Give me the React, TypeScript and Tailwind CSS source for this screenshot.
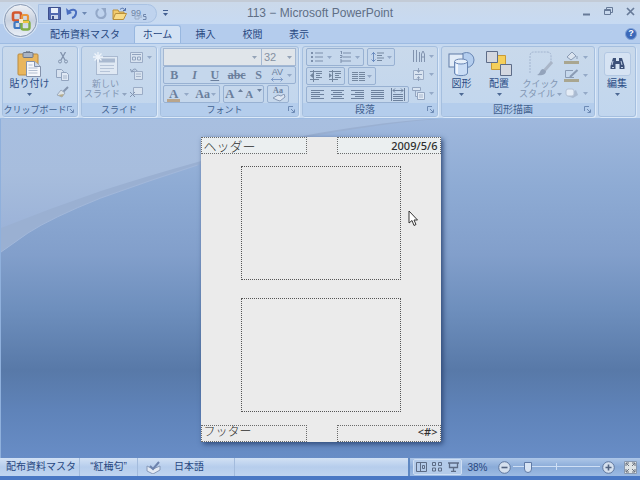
import React, { useState } from 'react';

type IconProps = { className?: string };

// ─── Small helpers ──────────────────────────────────────────────────────────
function Icon({ w, h, className = '', children }: { w: number; h: number; className?: string; children: React.ReactNode }) {
  return (
    <svg width={w} height={h} viewBox={`0 0 ${w} ${h}`} fill="none" className={`shrink-0 ${className}`} aria-hidden="true">
      {children}
    </svg>
  );
}

function Caret({ className = 'text-[#5b76a3]' }: IconProps) {
  return (
    <Icon w={5} h={3} className={className}>
      <path d="M0 0h5L2.500 3z" fill="currentColor" />
    </Icon>
  );
}

function Group({ label, launcher, small, className, children }: { label: string; launcher?: boolean; small?: boolean; className: string; children: React.ReactNode }) {
  return (
    <section
      aria-label={label || undefined}
      className={`flex h-[71px] shrink-0 flex-col overflow-hidden rounded-[3px] border border-[#a5bfdf] bg-gradient-to-b from-[#c9d9eb] to-[#c1d6ee] shadow-[1px_1px_0_#dce9f8] ${className}`}
    >
      <div className="flex min-h-0 flex-1">{children}</div>
      {label && (
        <div className={`flex h-[13px] items-center bg-[#b4cdec] leading-3 text-[#42618f] ${small ? 'text-[9px]' : 'text-[10px]'}`}>
          <span className="flex-1 whitespace-nowrap text-center">{label}</span>
          {launcher && (
            <button type="button" aria-label={`${label}の詳細`} className="mr-[3px]">
              <Icon w={7} h={7} className="text-[#6d8ab5]">
                <path d="M.5 5V.5H5M3 3l3 3M6.500 3.500v3h-3" stroke="currentColor" />
              </Icon>
            </button>
          )}
        </div>
      )}
    </section>
  );
}

function Box({ className = '', children }: { className?: string; children: React.ReactNode }) {
  return <div className={`flex h-[18px] items-center justify-around rounded-[2px] border border-[#98b1d2] bg-[#c5d7ec] ${className}`}>{children}</div>;
}

function Tool({ label, className = '', children }: { label: string; className?: string; children: React.ReactNode }) {
  return (
    <button type="button" aria-label={label} className={`flex items-center justify-center gap-1 ${className}`}>
      {children}
    </button>
  );
}

function BigButton({ lines, off, split, className, icon }: { lines: string[]; off?: boolean; split?: boolean; className: string; icon: React.ReactNode }) {
  return (
    <button
      type="button"
      className={`flex shrink-0 flex-col items-center pt-[3px] leading-[10px] ${split ? 'text-[9px]' : 'text-[10px]'} ${off ? 'text-[#8195b2]' : 'text-[#2b4c85]'} ${className}`}
    >
      <span className="flex h-[27px] items-center">{icon}</span>
      <span className="mt-[2px] whitespace-nowrap">{lines[0]}</span>
      <span className="flex h-[10px] items-center gap-[2px] whitespace-nowrap">
        {lines[1]}
        <Caret className={split ? 'text-[#90a4c0]' : 'text-[#4d6994]'} />
      </span>
    </button>
  );
}

// ─── Icons ──────────────────────────────────────────────────────────────────
function OfficeLogo() {
  return (
    <Icon w={22} h={22}>
      <rect x="3" y="2.500" width="8" height="8" rx="2" stroke="#d3582f" strokeWidth="2.600" />
      <rect x="12" y="5" width="6" height="6" rx="1.500" stroke="#e9953b" strokeWidth="2.200" />
      <rect x="4.500" y="12" width="6" height="6" rx="1.500" stroke="#3f78c2" strokeWidth="2.200" />
      <rect x="11.500" y="11.500" width="8" height="8" rx="2" stroke="#7fae46" strokeWidth="2.400" />
      <path d="M9 9h4v4H9z" fill="#fbe9c4" />
      <path d="M13 12h6" stroke="#f0c53f" strokeWidth="2" />
    </Icon>
  );
}

function PasteIcon() {
  return (
    <Icon w={25} h={26}>
      <rect x="1" y="3" width="20" height="21" rx="1" fill="#e9b65d" stroke="#b98b43" />
      <rect x="6" y="1.500" width="10" height="5" rx="1" fill="#aab4c3" stroke="#6c7789" />
      <path d="M9 1.500a2 1.500 0 0 1 4 0" stroke="#6c7789" />
      <path d="M9.500 10.500h8l6 5v10h-14z" fill="#f5f7fb" stroke="#8492ab" />
      <path d="M17.500 10.500v5h6" fill="#ccd7e8" stroke="#8492ab" />
      <path d="M11.500 14h4M11.500 17h9M11.500 19.500h9M11.500 22h9" stroke="#b3bfd2" />
    </Icon>
  );
}

function NewSlideIcon() {
  return (
    <Icon w={26} h={24}>
      <rect x="3.500" y="4.500" width="21" height="18" fill="#dfe8f3" stroke="#a9b9d0" />
      <path d="M6 8.500h16" stroke="#a9b9d0" strokeWidth="4" />
      <path d="M7 13.500h14M7 16.500h14M7 19.500h10" stroke="#b6c4d8" />
      <path d="M5 0v10M0 5h10M1.500 1.500l7 7M8.500 1.500l-7 7" stroke="#eef4fb" strokeWidth="1.300" />
    </Icon>
  );
}

function ShapesIcon() {
  return (
    <Icon w={27} h={26}>
      <circle cx="18.500" cy="9" r="7.500" fill="#b3cdee" stroke="#6785b3" />
      <rect x="1" y="3" width="14" height="13" fill="#e2ecf8" stroke="#5f7ba6" />
      <path d="M6.500 11v11c0 3.500 13 3.500 13 0V11z" fill="#c9dcf5" stroke="#6885b3" />
      <path d="M9 12v11" stroke="#eff5fc" strokeWidth="2" />
      <ellipse cx="13" cy="10.500" rx="6.500" ry="2.500" fill="#e6effa" stroke="#6885b3" />
    </Icon>
  );
}

function ArrangeIcon() {
  return (
    <Icon w={28} h={27}>
      <path d="M6.500 5.500h14v14h-14z" fill="#f5cf5b" stroke="#c99a35" />
      <path d="M1.500 1.500h11v11h-11z" fill="#d3d7e0" stroke="#5d6c88" />
      <path d="M15.500 14.500h11v11h-11z" fill="#d3d7e0" stroke="#5d6c88" />
    </Icon>
  );
}

function QuickStyleIcon() {
  return (
    <Icon w={27} h={26}>
      <path d="M3 22V5q0-4 4-4h13q4 0 4 4v6" stroke="#a2b4cf" strokeDasharray="2 1" />
      <path d="M25 11l-8 9" stroke="#a9b5c7" strokeWidth="3" />
      <path d="M10 24c4 1 9 0 9-4l-3-2c-3 0-2 4-6 6z" fill="#93a3bb" />
    </Icon>
  );
}

function BinocularsIcon() {
  return (
    <Icon w={15} h={13}>
      <path d="M3 1h3v3h3V1h3l2.500 8v3h-5V7h-4v5h-5V9z" fill="#3c5078" />
      <path d="M2 8l1-4M12 8l-1-4M2 10.500h2M11 10.500h2" stroke="#c3d1e6" />
    </Icon>
  );
}

function CutIcon() {
  return (
    <Icon w={12} h={12}>
      <path d="M3.500 0L8 8M8.500 0L4 8" stroke="#8192ac" strokeWidth="1.300" />
      <circle cx="3" cy="9.500" r="1.500" stroke="#8192ac" />
      <circle cx="9" cy="9.500" r="1.500" stroke="#8192ac" />
    </Icon>
  );
}

function CopyIcon() {
  return (
    <Icon w={13} h={12}>
      <path d="M.5.5h5l2 2v6h-7z" fill="#d6e1ef" stroke="#92a4bf" />
      <path d="M5.500 3.500h5l2 2v6h-7z" fill="#dfe8f4" stroke="#92a4bf" />
      <path d="M7 7h4M7 9h4" stroke="#a8b7cc" />
    </Icon>
  );
}

function BrushIcon() {
  return (
    <Icon w={13} h={12}>
      <path d="M12 1L7 6" stroke="#8495ae" strokeWidth="2" />
      <path d="M5 4l4 3-3 4-5-2z" fill="#dde3e8" stroke="#9aa9bd" />
      <path d="M2 9l4 2 2-3z" fill="#b4ab8b" />
    </Icon>
  );
}

function LayoutIcon() {
  return (
    <Icon w={13} h={11}>
      <path d="M.5.5h12v10H.5z" fill="#d7e2ef" stroke="#9bacc6" />
      <path d="M2 2.500h9M2.500 5h3v3h-3zM7.500 5h3v3h-3z" stroke="#92a4bf" />
    </Icon>
  );
}

function ResetIcon() {
  return (
    <Icon w={13} h={12}>
      <path d="M4.500 3.500h8v8h-8z" fill="#d7e2ef" stroke="#9bacc6" />
      <path d="M6 6h5M6 8.500h5" stroke="#a5b4ca" />
      <path d="M7 3C6 0 3 1 2 3M.5 1l1 3 3-1" stroke="#8294b0" />
    </Icon>
  );
}

function DeleteSlideIcon() {
  return (
    <Icon w={13} h={12}>
      <path d="M3.500 1.500h9v7h-9z" fill="#d7e2ef" stroke="#9bacc6" />
      <path d="M0 6l5 5M5 6l-5 5" stroke="#8294b0" />
    </Icon>
  );
}

function ListIcon({ numbered }: { numbered?: boolean }) {
  return (
    <Icon w={12} h={12} className="text-[#7c8fab]">
      {numbered ? (
        <path d="M1 0h1.500v3M1 4.500h2v2H1M1 9h2v2H1" stroke="currentColor" />
      ) : (
        <path d="M0 1h2v2H0zM0 5h2v2H0zM0 9h2v2H0z" fill="currentColor" />
      )}
      <path d="M4 2h8M4 6h8M4 10h8" stroke="currentColor" />
    </Icon>
  );
}

function LineSpacingIcon() {
  return (
    <Icon w={14} h={12}>
      <path d="M2.500 1v10M.5 3.500l2-2 2 2M.5 8.500l2 2 2-2" stroke="#6c8dc0" />
      <path d="M6 2h7M6 4.500h5M6 7h7M6 9.500h5" stroke="#74879f" />
    </Icon>
  );
}

function IndentIcon({ out }: { out?: boolean }) {
  return (
    <Icon w={14} h={12} className="text-[#73869f]">
      <path d="M1 1.500h12M7 3.500h6M7 5.500h4M7 7.500h6M1 9.500h9M4.500 0v12" stroke="currentColor" />
      <path d={out ? 'M4 3L1 5.500 4 8z' : 'M1 3l3 2.500L1 8z'} fill="currentColor" />
    </Icon>
  );
}

function AlignIcon({ rows }: { rows: [number, number][] }) {
  return (
    <Icon w={13} h={11} className="text-[#6d819d]">
      {rows.map(([x, w], i) => (
        <path key={i} d={`M${x} ${i * 2 + 1.5}h${w}`} stroke="currentColor" />
      ))}
    </Icon>
  );
}

const ALIGN: { label: string; rows: [number, number][] }[] = [
  { label: '左揃え', rows: [[0, 13], [0, 9], [0, 13], [0, 9], [0, 13]] },
  { label: '中央揃え', rows: [[0, 13], [2, 9], [0, 13], [2, 9], [0, 13]] },
  { label: '右揃え', rows: [[0, 13], [4, 9], [0, 13], [4, 9], [0, 13]] },
  { label: '両端揃え', rows: [[0, 13], [0, 13], [0, 13], [0, 13], [0, 13]] },
];

// Blue master background with the lighter wave in the top left corner
function Backdrop() {
  return (
    <svg className="absolute inset-0 h-full w-full" viewBox="0 0 640 339" preserveAspectRatio="none" aria-hidden="true">
      <defs>
        <linearGradient id="base" x1="0" y1="0" x2="0" y2="1">
          <stop offset="0" stopColor="#9fb8dd" />
          <stop offset=".2" stopColor="#8eabd4" />
          <stop offset=".4" stopColor="#829fcb" />
          <stop offset=".56" stopColor="#6e8fbd" />
          <stop offset=".74" stopColor="#5879a8" />
          <stop offset=".86" stopColor="#5f83b9" />
          <stop offset="1" stopColor="#688dc6" />
        </linearGradient>
        <linearGradient id="wave" x1="0" y1="0" x2="0" y2="1">
          <stop offset="0" stopColor="#a8bfe0" />
          <stop offset=".5" stopColor="#a7bddd" />
          <stop offset="1" stopColor="#9cb3d8" />
        </linearGradient>
      </defs>
      <path d="M0 0h640v339H0z" fill="url(#base)" />
      <path d="M0 0h440Q400 2 318 16 250 29 197 46 150 61 100 79 50 99 27 114L0 133z" fill="#9ab0d2" />
      <path d="M0 133L27 114Q50 99 100 79 150 61 197 46" stroke="#a3b8da" fill="none" />
      <path d="M0 0h430Q390 2 318 14 250 27 197 43 150 56 100 72 50 89 0 109z" fill="url(#wave)" />
    </svg>
  );
}

const TABS = [
  { label: '配布資料マスタ', width: 'w-[98px]' },
  { label: 'ホーム', width: 'w-[47px]' },
  { label: '挿入', width: 'w-[49px]' },
  { label: '校閲', width: 'w-[45px]' },
  { label: '表示', width: 'w-[48px]' },
];

export default function App() {
  const [tab, setTab] = useState('ホーム');
  const [zoom, setZoom] = useState(14);

  return (
    <div className="flex min-h-screen flex-col bg-[#b5cdee] font-['Liberation_Sans','Noto_Sans_CJK_JP',sans-serif] text-[10px] text-[#27477f]">
      {/* Title bar */}
      <header className="relative flex h-6 items-center border-t-2 border-[#c3cbd6] bg-gradient-to-b from-[#cbd9ea] to-[#c7daf2]">
        <button
          type="button"
          aria-label="Office ボタン"
          className="absolute left-[4px] top-[2px] z-10 flex size-[33px] items-center justify-center rounded-full border border-[#8d9db5] bg-gradient-to-b from-[#eef1f6] via-[#c8d1df] to-[#e9eff7] shadow-[0_0_0_1px_#dbe6f4]"
        >
          <OfficeLogo />
        </button>
        <div className="ml-[38px] flex h-[19px] w-[119px] items-center rounded-r-full border border-[#a9c2e3] bg-[#bfd3ee] pl-2">
          <Tool label="上書き保存" className="w-[14px]">
            <Icon w={13} h={13}>
              <path d="M.5.5h12v12H.5z" fill="#5269b0" stroke="#3d4f8c" />
              <path d="M3 1h7v5H3z" fill="#e8effa" />
              <path d="M3 8h7v4H3z" fill="#ccd6ea" />
              <path d="M4 9h2v3H4z" fill="#3d4f8c" />
            </Icon>
          </Tool>
          <Tool label="元に戻す" className="ml-[5px]">
            <Icon w={12} h={12}>
              <path d="M2.500 5.500C5 1.500 11 2 10 6.500 9.500 9 8 10.500 6 11" stroke="#4b6fc0" strokeWidth="2" />
              <path d="M0 1l1 7 5-2z" fill="#4b6fc0" />
            </Icon>
            <Caret className="text-[#6d88b3]" />
          </Tool>
          <Tool label="やり直し" className="ml-[8px]">
            <Icon w={12} h={12}>
              <path d="M3.500 2C0 5 1 11 6 11s5.500-5 3-8" stroke="#93a8c8" strokeWidth="2" />
              <path d="M6 1h5v5z" fill="#93a8c8" />
            </Icon>
          </Tool>
          <Tool label="開く" className="ml-[5px]">
            <Icon w={15} h={13}>
              <path d="M1 12V3h5l1 2h5v2" fill="#f1ca6d" stroke="#b98f3c" />
              <path d="M1 12.500l2.500-6h11l-3 6z" fill="#f8db89" stroke="#b98f3c" />
              <path d="M8 2.500c2-2 4-1.500 4.500.5M13.500 1v2.500H11" stroke="#4d6ca8" />
            </Icon>
          </Tool>
          <button type="button" className="relative ml-[4px] h-[15px] w-[15px] text-left text-[9px] leading-[9px] text-[#6d82a3]">
            99
            <Icon w={13} h={7} className="absolute bottom-0 left-[3px]">
              <path d="M1 2h4v3H1zM7 1v3" stroke="#9aacc6" />
              <path d="M12 .5H9.500v2H12v3H9" stroke="#7087ad" />
            </Icon>
          </button>
        </div>
        <Tool label="クイック アクセスのカスタマイズ" className="ml-[6px] flex-col gap-[1px]">
          <Icon w={5} h={6} className="text-[#425f91]">
            <path d="M0 .5h5" stroke="currentColor" />
            <path d="M0 3h5L2.500 6z" fill="currentColor" />
          </Icon>
        </Tool>
        <h1 className="flex-1 pr-[168px] text-center text-[12px] text-[#5f6f86]">113 − Microsoft PowerPoint</h1>
        <div className="absolute right-[5px] top-[4px] flex items-center gap-[13px] text-[#677a98]">
          <Tool label="最小化">
            <Icon w={9} h={10}><path d="M1 8.500h7" stroke="currentColor" strokeWidth="2" /></Icon>
          </Tool>
          <Tool label="元に戻す (縮小)">
            <Icon w={9} h={10}>
              <path d="M2.500 3V1.500h6v5H7M.5 3.500h6v5h-6zM.5 4.500h6" stroke="currentColor" />
            </Icon>
          </Tool>
          <Tool label="閉じる">
            <Icon w={9} h={10}><path d="M1 2l7 7M8 2L1 9" stroke="currentColor" strokeWidth="1.700" /></Icon>
          </Tool>
        </div>
      </header>

      {/* Ribbon tabs */}
      <nav className="flex h-[19px] items-end bg-[#b4cced] pl-[36px]" role="tablist">
        {TABS.map((t) => (
          <button
            key={t.label}
            type="button"
            role="tab"
            aria-selected={tab === t.label}
            onClick={() => setTab(t.label)}
            className={`h-[18px] shrink-0 whitespace-nowrap text-[10px] leading-[17px] ${t.width} ${
              tab === t.label ? 'rounded-t-[3px] border border-b-0 border-[#98b7df] bg-[#d3e2f4]' : ''
            }`}
          >
            {t.label}
          </button>
        ))}
        <button
          type="button"
          aria-label="ヘルプ"
          className="ml-auto mr-[3px] flex size-[12px] items-center justify-center self-center rounded-full border border-[#7d9fd6] bg-[#3b68b8] text-[9px] font-bold leading-none text-white"
        >
          ?
        </button>
      </nav>

      {/* Ribbon */}
      <div className="flex h-[76px] gap-[3px] overflow-hidden border-y border-[#9dbbe2] bg-[#c6d9f0] px-[2px] pt-[2px]">
        <Group label="クリップボード" launcher small className="w-[76px]">
          <BigButton lines={['貼り付け']} className="w-[53px]" icon={<PasteIcon />} />
          <div className="flex flex-col justify-around py-[2px]">
            <Tool label="切り取り"><CutIcon /></Tool>
            <Tool label="コピー"><CopyIcon /></Tool>
            <Tool label="書式のコピー"><BrushIcon /></Tool>
          </div>
        </Group>

        <Group label="スライド" small className="w-[76px]">
          <BigButton lines={['新しい', 'スライド']} off split className="w-[47px]" icon={<NewSlideIcon />} />
          <div className="flex flex-col items-start justify-around py-[2px] pl-[1px]">
            <Tool label="レイアウト"><LayoutIcon /><Caret className="text-[#94a9c7]" /></Tool>
            <Tool label="リセット"><ResetIcon /></Tool>
            <Tool label="削除"><DeleteSlideIcon /></Tool>
          </div>
        </Group>

        <Group label="フォント" launcher small className="w-[139px]">
          <div className="flex flex-col pl-[2px] pt-[1px] font-['Liberation_Serif',serif] text-[12px] leading-4 text-[#6b7f9c]">
            <div className="flex h-[18px] border border-[#a4b8d3] bg-[#e0e5ea] font-['Liberation_Sans',sans-serif]">
              <label className="relative flex w-[98px] items-center border-r border-[#a4b8d3]">
                <select aria-label="フォント名" className="h-full w-full appearance-none bg-transparent pl-1 text-[11px]">
                  <option></option>
                </select>
                <Caret className="pointer-events-none absolute right-[4px] text-[#94a3b7]" />
              </label>
              <label className="relative flex w-[33px] items-center">
                <select aria-label="フォント サイズ" className="h-full w-full appearance-none bg-transparent pl-[2px] text-[11px] text-[#8591a2]">
                  <option>32</option>
                </select>
                <Caret className="pointer-events-none absolute right-[3px] text-[#94a3b7]" />
              </label>
            </div>
            <Box className="w-[133px]">
              <Tool label="太字" className="w-[20px]"><b>B</b></Tool>
              <Tool label="斜体" className="w-[20px]"><i className="font-bold">I</i></Tool>
              <Tool label="下線" className="w-[20px]"><span className="font-bold underline">U</span></Tool>
              <Tool label="取り消し線" className="w-[23px]"><span className="font-bold line-through">abc</span></Tool>
              <Tool label="影" className="w-[20px]"><b>S</b></Tool>
              <Tool label="文字の間隔" className="w-[26px]">
                <span className="flex flex-col items-center font-['Liberation_Sans',sans-serif] text-[9px] leading-[9px]">
                  AV
                  <Icon w={12} h={5}><path d="M0 2.500h12M2.500.5l-2 2 2 2M9.500.5l2 2-2 2" stroke="#7f9cc9" /></Icon>
                </span>
                <Caret className="text-[#94a9c7]" />
              </Tool>
            </Box>
            <div className="mt-[1px] flex gap-[3px]">
              <Box className="w-[57px]">
                <Tool label="フォントの色">
                  <span className="h-[15px] border-b-[3px] border-[#b9a58c] px-[2px] text-[13px] font-bold leading-[13px]">A</span>
                  <Caret className="text-[#94a9c7]" />
                </Tool>
                <Tool label="文字種の変換" className="gap-[1px] font-bold">Aa<Caret className="text-[#94a9c7]" /></Tool>
              </Box>
              <Box className="w-[41px]">
                <Tool label="拡大" className="gap-0 text-[13px] font-bold">A<Caret className="mb-2 rotate-180" /></Tool>
                <Tool label="縮小" className="gap-0 text-[11px] font-bold">A<Caret className="mb-2" /></Tool>
              </Box>
              <Box className="w-[22px]">
                <Tool label="書式のクリア">
                  <span className="flex flex-col items-center text-[8px] font-bold leading-[7px]">
                    Aa
                    <Icon w={15} h={8}>
                      <path d="M2 4l5-3 3 1 3-2 1 3-5 4-3-1z" fill="#dde6f2" stroke="#8799b5" />
                    </Icon>
                  </span>
                </Tool>
              </Box>
            </div>
          </div>
        </Group>

        <Group label="段落" launcher className="w-[136px]">
          <div className="flex flex-col gap-[1px] pl-[3px] pt-[1px]">
            <div className="flex gap-[3px]">
              <Box className="w-[58px]">
                <Tool label="箇条書き"><ListIcon /><Caret className="text-[#94a9c7]" /></Tool>
                <Tool label="段落番号"><ListIcon numbered /><Caret className="text-[#94a9c7]" /></Tool>
              </Box>
              <Box className="w-[28px]">
                <Tool label="行間" className="gap-[2px]"><LineSpacingIcon /><Caret className="text-[#94a9c7]" /></Tool>
              </Box>
            </div>
            <div className="flex gap-[3px]">
              <Box className="w-[39px]">
                <Tool label="インデントを減らす"><IndentIcon out /></Tool>
                <Tool label="インデントを増やす"><IndentIcon /></Tool>
              </Box>
              <Box className="w-[28px]">
                <Tool label="段組み" className="gap-[2px]">
                  <Icon w={13} h={11}>
                    <path d="M0 1.500h6M7 1.500h6M0 3.500h6M7 3.500h6M0 5.500h6M7 5.500h6M0 7.500h6M7 7.500h6M0 9.500h6M7 9.500h6" stroke="#74879f" />
                  </Icon>
                  <Caret className="text-[#94a9c7]" />
                </Tool>
              </Box>
            </div>
            <Box className="w-[103px]">
              {ALIGN.map((a) => (
                <Tool key={a.label} label={a.label}><AlignIcon rows={a.rows} /></Tool>
              ))}
              <Tool label="均等割り付け">
                <Icon w={14} h={13} className="text-[#6d819d]">
                  <path d="M.5 0v13M13.500 0v13M2 2.500h10M4 .5l-2 2 2 2M10 .5l2 2-2 2M2 6.500h10M2 8.500h10M2 10.500h10M2 12.500h10" stroke="currentColor" />
                </Icon>
              </Tool>
            </Box>
          </div>
          <div className="flex flex-col justify-around pl-[3px]">
            <Tool label="文字列の方向">
              <Icon w={13} h={13}>
                <path d="M1.500 0v12M4.500 0v12M7.500 2v10M9.500 12V4L11 1l1.500 3v8M9.500 7h3" stroke="#8193ae" />
              </Icon>
              <Caret className="text-[#94a9c7]" />
            </Tool>
            <Tool label="文字の配置">
              <Icon w={13} h={13}>
                <path d="M1.500 2.500h10v9h-10z" fill="#d9e4f1" stroke="#9bacc6" />
                <path d="M6.500 0v4M5 2.500l1.500 2 1.500-2M6.500 13V9M5 10.500l1.500-2 1.500 2M3 6.500h7" stroke="#8ea0bb" />
              </Icon>
              <Caret className="text-[#94a9c7]" />
            </Tool>
            <Tool label="SmartArt に変換">
              <Icon w={13} h={13}>
                <path d="M.5.5h8v3h-8zM3.500 3.500v6h3" fill="#d9e4f1" stroke="#93a5c0" />
                <path d="M5.500 5.500h7v7h-7z" fill="#e2ebf6" stroke="#93a5c0" />
                <path d="M7 8h4M7 10h4" stroke="#a7b6cc" />
              </Icon>
              <Caret className="text-[#94a9c7]" />
            </Tool>
          </div>
        </Group>

        <Group label="図形描画" launcher className="w-[154px]">
          <BigButton lines={['図形']} className="w-[39px]" icon={<ShapesIcon />} />
          <BigButton lines={['配置']} className="w-[36px]" icon={<ArrangeIcon />} />
          <BigButton lines={['クイック', 'スタイル']} off split className="w-[47px]" icon={<QuickStyleIcon />} />
          <div className="flex flex-col justify-around py-[1px]">
            <Tool label="図形の塗りつぶし">
              <Icon w={15} h={13}>
                <path d="M3 6l5-5 4 4-5 4z" fill="#dbe4ef" stroke="#8a9bb4" />
                <path d="M13 5v3" stroke="#8a9bb4" />
                <path d="M0 11.500h15" stroke="#a9a690" strokeWidth="3" />
              </Icon>
              <Caret className="text-[#94a9c7]" />
            </Tool>
            <Tool label="図形の枠線">
              <Icon w={15} h={13}>
                <path d="M9 1.500H1.500v7H10" stroke="#8a9bb4" />
                <path d="M13.500 1L6 8" stroke="#8a9bb4" strokeWidth="2" />
                <path d="M0 11.500h15" stroke="#a9a690" strokeWidth="3" />
              </Icon>
              <Caret className="text-[#94a9c7]" />
            </Tool>
            <Tool label="図形の効果">
              <Icon w={15} h={12}>
                <path d="M3 9l9-6 2 5-5 3z" fill="#a9bad1" />
                <rect x="2" y="2" width="8" height="7" rx="2" fill="#e4ecf6" stroke="#b3c1d5" />
              </Icon>
              <Caret className="text-[#94a9c7]" />
            </Tool>
          </div>
        </Group>

        <Group label="" className="w-[38px]">
          <BigButton
            lines={['編集']}
            className="w-full"
            icon={
              <span className="flex h-[24px] w-[27px] items-center justify-center rounded-[3px] border border-[#b3c8e3] bg-[#d6e3f3]">
                <BinocularsIcon />
              </span>
            }
          />
        </Group>
      </div>

      {/* Handout page */}
      <main className="relative flex flex-1 items-center justify-center border-l border-[#8fb0dc] pt-[2px]">
        <Backdrop />
        <div className="relative flex w-[240px] flex-col items-center bg-[#ebebeb] font-['Noto_Sans','Noto_Sans_CJK_JP',sans-serif] text-[11px] leading-4 text-[#2f2f2f] shadow-[2px_2px_5px_#2f4a78]">
          <div className="flex w-full justify-between">
            <div className="h-[17px] w-[106px] border border-dotted border-[#6b6b6b] bg-[#ebeff0] pl-[2px] font-['Noto_Sans_CJK_JP',sans-serif] text-[13px] font-light">ヘッダー</div>
            <div className="h-[17px] w-[104px] border border-dotted border-[#6b6b6b] bg-[#ebeff0] pr-[2px] text-right font-medium">2009/5/6</div>
          </div>
          <div className="mt-[12px] h-[114px] w-[160px] border border-dotted border-[#555]" />
          <div className="mt-[18px] h-[114px] w-[160px] border border-dotted border-[#555]" />
          <div className="mt-[13px] flex w-full justify-between">
            <div className="h-[17px] w-[106px] border border-dotted border-[#6b6b6b] pl-[2px] font-['Noto_Sans_CJK_JP',sans-serif] text-[12px] font-light leading-[10px]">フッター</div>
            <div className="h-[17px] w-[104px] border border-dotted border-[#6b6b6b] pr-[2px] text-right font-medium leading-[12px]">&lt;#&gt;</div>
          </div>
          {/* Mouse pointer */}
          <Icon w={10} h={17} className="absolute left-[207px] top-[73px]">
            <path d="M1 1v12l3-2.500 2 5 2-1-2-4.500h3.500z" fill="#fff" stroke="#333" />
          </Icon>
        </div>
      </main>

      {/* Status bar */}
      <footer className="flex h-[22px] items-stretch whitespace-nowrap border-b-4 border-[#4a78c4] bg-gradient-to-b from-[#d2e1f4] via-[#b6cdec] to-[#c0d5f0] text-[10px] leading-[17px]">
        <span className="w-[80px] border-r border-[#a3bbdc] pl-[6px]">配布資料マスタ</span>
        <span className="w-[58px] border-r border-[#a3bbdc] text-center">“紅梅匂”</span>
        <Tool label="スペルチェック" className="w-[30px]">
          <Icon w={15} h={13}>
            <path d="M1 5l6 3 7-3v4l-7 4-6-3z" fill="#e3e9f3" stroke="#8699b8" />
            <path d="M4 5l3 3 6-7" stroke="#6d83ad" strokeWidth="2" />
          </Icon>
        </Tool>
        <span className="w-[67px] border-r border-[#a3bbdc] pl-[6px]">日本語</span>
        <div className="ml-auto flex items-center border-l-2 border-[#5f88c2] bg-gradient-to-b from-[#aec7e8] via-[#8aabd8] to-[#9dbbe3] pl-[3px] pr-[3px]">
          <div className="flex h-[16px] w-[49px] items-center justify-around rounded-[2px] border border-[#cfdff3] bg-[#b4cbe9] text-[#5d6c86]">
            <Tool label="標準">
              <Icon w={11} h={10}><path d="M.5.5h10v9H.5zM4.500 1v8M6.500 3.500h2v3h-2z" stroke="currentColor" /></Icon>
            </Tool>
            <Tool label="スライド一覧">
              <Icon w={11} h={10}><path d="M.5.5h3v3h-3zM6.500.5h3v3h-3zM.5 6h3v3h-3zM6.500 6h3v3h-3z" stroke="currentColor" /></Icon>
            </Tool>
            <Tool label="スライド ショー">
              <Icon w={11} h={10}><path d="M0 1h11M1.500 1v4.500h8V1M5.500 6v3M3 9.500h5" stroke="currentColor" strokeWidth="1.300" /></Icon>
            </Tool>
          </div>
          <button type="button" className="w-[31px] text-center">38%</button>
          <Tool label="縮小" className="ml-[5px]">
            <Icon w={13} h={13}>
              <circle cx="6.500" cy="6.500" r="5.800" fill="#d5e0ee" stroke="#60789f" />
              <path d="M3.500 6.500h6" stroke="#51627f" strokeWidth="1.600" />
            </Icon>
          </Tool>
          <div className="relative mx-[2px] flex h-[16px] w-[87px] items-center">
            <span className="absolute left-0 top-[7px] h-[1px] w-full bg-[#cfdff4]" />
            <span className="absolute left-[43px] top-[4px] h-[7px] w-[1px] bg-[#cfdff4]" />
            <input
              type="range"
              aria-label="ズーム"
              min={0}
              max={100}
              value={zoom}
              onChange={(e) => setZoom(Number(e.target.value))}
              className="relative w-full appearance-none bg-transparent [&::-webkit-slider-thumb]:h-[11px] [&::-webkit-slider-thumb]:w-[8px] [&::-webkit-slider-thumb]:appearance-none [&::-webkit-slider-thumb]:rounded-b-full [&::-webkit-slider-thumb]:border [&::-webkit-slider-thumb]:border-[#607aa6] [&::-webkit-slider-thumb]:bg-[#d9e5f4]"
            />
          </div>
          <Tool label="拡大">
            <Icon w={13} h={13}>
              <circle cx="6.500" cy="6.500" r="5.800" fill="#d5e0ee" stroke="#60789f" />
              <path d="M3.500 6.500h6M6.500 3.500v6" stroke="#51627f" strokeWidth="1.600" />
            </Icon>
          </Tool>
          <Tool label="ウィンドウに合わせる" className="ml-[9px]">
            <Icon w={13} h={13}>
              <path d="M.5.5h12v12H.5z" fill="#dfe4e6" stroke="#8798b0" />
              <path d="M2 2l3 3M11 2L8 5M2 11l3-3M11 11L8 8M2 5V2h3M8 2h3v3M2 8v3h3M8 11h3V8" stroke="#6b7380" />
            </Icon>
          </Tool>
        </div>
      </footer>
    </div>
  );
}
